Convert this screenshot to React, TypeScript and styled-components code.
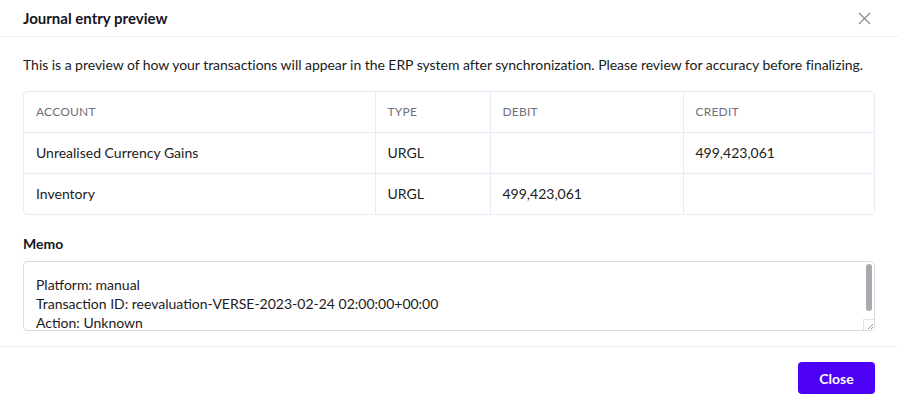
import React from "react";
import styled, { createGlobalStyle } from "styled-components";

const Global = createGlobalStyle`
  html, body { margin: 0; padding: 0; background: #fff; }
  body { font-family: Lato, "Noto Sans", sans-serif; color: #1b1b22; }
  * { box-sizing: border-box; }
`;

const Modal = styled.div`
  width: 898px;
  height: 407px;
  display: flex;
  flex-direction: column;
  background: #fff;
  overflow: hidden;
`;

const Header = styled.div`
  flex-shrink: 0;
  height: 37px;
  display: flex;
  align-items: center;
  justify-content: space-between;
  padding: 0 27px 0 23px;
  border-bottom: 1px solid #e9edf9;
`;

const Title = styled.h2`
  margin: 0;
  font-size: 15px;
  font-weight: 700;
  color: #16161d;
`;

const CloseIcon = styled.button`
  width: 14px;
  height: 14px;
  padding: 0;
  border: none;
  background: none;
  display: flex;
  align-items: center;
  justify-content: center;
  cursor: pointer;
`;

const Body = styled.div`
  flex-shrink: 0;
  padding: 19px 23px 15px;
  display: flex;
  flex-direction: column;
`;

const Description = styled.p`
  margin: 0 0 17px;
  font-size: 14px;
  line-height: 18px;
  letter-spacing: -0.04px;
  color: #1b1b22;
`;

const TableWrap = styled.div`
  border: 1px solid #e6ebf8;
  border-radius: 4px;
  overflow: hidden;
`;

const Table = styled.table`
  width: 100%;
  border-collapse: collapse;
  table-layout: fixed;
`;

const Th = styled.th<{ $w: number }>`
  width: ${(p) => p.$w}px;
  height: 40px;
  padding: 0 12px;
  text-align: left;
  font-size: 12px;
  font-weight: 400;
  letter-spacing: 0.2px;
  color: #70707c;
  border-left: 1px solid #e6ebf8;
  border-bottom: 1px solid #e6ebf8;
  &:first-child { border-left: none; }
`;

const Td = styled.td`
  height: 41px;
  padding: 0 12px;
  font-size: 14px;
  color: #1b1b22;
  border-left: 1px solid #e6ebf8;
  border-bottom: 1px solid #e6ebf8;
  &:first-child { border-left: none; }
  tr:last-child & { border-bottom: none; }
`;

const Label = styled.div`
  margin-top: 20px;
  margin-bottom: 8px;
  font-size: 14px;
  line-height: 18px;
  font-weight: 700;
  color: #16161d;
`;

const MemoBox = styled.div`
  position: relative;
  height: 70px;
`;

const Memo = styled.textarea`
  width: 100%;
  height: 70px;
  padding: 13px 20px 4px 12px;
  border: 1px solid #dcdcdf;
  border-radius: 4px;
  font-family: Lato, "Noto Sans", sans-serif;
  font-size: 14px;
  line-height: 19px;
  color: #1b1b22;
  resize: none;
  outline: none;
  display: block;
  overflow: hidden;
`;

const Thumb = styled.div`
  position: absolute;
  top: 3px;
  right: 3px;
  width: 6px;
  height: 47px;
  border-radius: 3px;
  background: #a9a9b0;
`;

const Corner = styled.div`
  position: absolute;
  right: 1px;
  bottom: 1px;
  width: 11px;
  height: 11px;
  border-left: 1px solid #e2e2e5;
  border-top: 1px solid #e2e2e5;
  background: #fff;
  display: flex;
  align-items: flex-end;
  justify-content: flex-end;
  border-bottom-right-radius: 3px;
`;

const Footer = styled.div`
  flex: 1;
  border-top: 1px solid #e9edf9;
  display: flex;
  justify-content: flex-end;
  align-items: flex-start;
  padding: 15px 23px;
`;

const Button = styled.button`
  width: 77px;
  height: 32px;
  border: none;
  border-radius: 4px;
  background: #4d00f6;
  color: #fff;
  font-family: Lato, "Noto Sans", sans-serif;
  font-size: 14px;
  font-weight: 700;
  cursor: pointer;
`;

const rows = [
  { account: "Unrealised Currency Gains", type: "URGL", debit: "", credit: "499,423,061" },
  { account: "Inventory", type: "URGL", debit: "499,423,061", credit: "" },
];

export default function App() {
  return (
    <>
      <Global />
      <Modal>
        <Header>
          <Title>Journal entry preview</Title>
          <CloseIcon aria-label="Close">
            <svg width="13" height="13" viewBox="0 0 13 13">
              <path d="M1 1 L12 12 M12 1 L1 12" stroke="#8a8a90" strokeWidth="1.2" fill="none" />
            </svg>
          </CloseIcon>
        </Header>
        <Body>
          <Description>
            This is a preview of how your transactions will appear in the ERP system after synchronization. Please review for accuracy before finalizing.
          </Description>
          <TableWrap>
            <Table>
              <thead>
                <tr>
                  <Th $w={351}>ACCOUNT</Th>
                  <Th $w={115}>TYPE</Th>
                  <Th $w={193}>DEBIT</Th>
                  <Th $w={193}>CREDIT</Th>
                </tr>
              </thead>
              <tbody>
                {rows.map((r) => (
                  <tr key={r.account}>
                    <Td>{r.account}</Td>
                    <Td>{r.type}</Td>
                    <Td>{r.debit}</Td>
                    <Td>{r.credit}</Td>
                  </tr>
                ))}
              </tbody>
            </Table>
          </TableWrap>
          <Label>Memo</Label>
          <MemoBox>
            <Memo
              readOnly
              defaultValue={
                "Platform: manual\nTransaction ID: reevaluation-VERSE-2023-02-24 02:00:00+00:00\nAction: Unknown\nCurrency: EUR\nAmount: 499,423,061"
              }
            />
            <Thumb />
            <Corner>
              <svg width="8" height="8" viewBox="0 0 8 8">
                <path d="M7 2 L2 7 M7 5 L5 7" stroke="#9a9aa0" strokeWidth="1" fill="none" />
              </svg>
            </Corner>
          </MemoBox>
        </Body>
        <Footer>
          <Button>Close</Button>
        </Footer>
      </Modal>
    </>
  );
}
